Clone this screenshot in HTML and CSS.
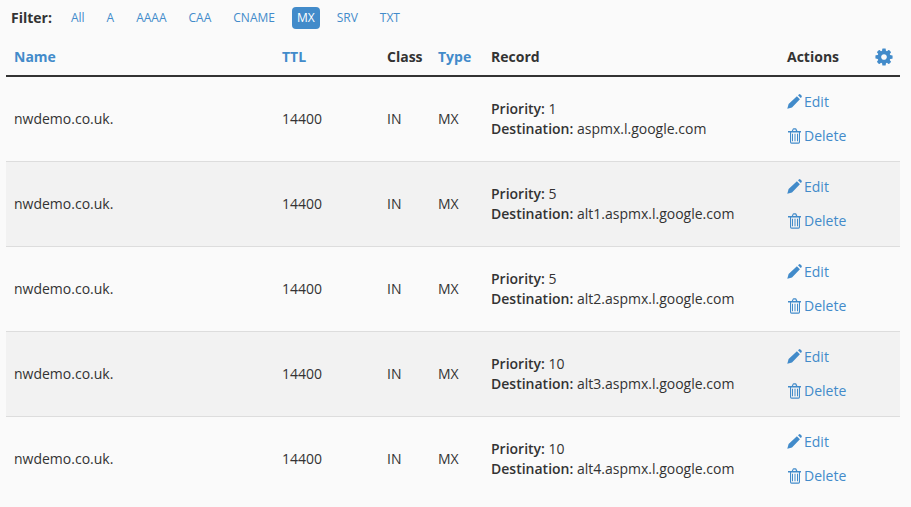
FILE: index.html
```html
<!DOCTYPE html>
<html lang="en">
<head>
<meta charset="utf-8">
<title>DNS records</title>
<link rel="stylesheet" href="styles.css">
</head>
<body>
<svg class="defs" width="0" height="0" aria-hidden="true">
  <symbol id="i-cog" viewBox="0 0 1792 1792"><path d="M1152 896q0-106-75-181t-181-75-181 75-75 181 75 181 181 75 181-75 75-181zm512-109v222q0 12-8 23t-20 13l-185 28q-19 54-39 91 35 50 107 138 10 12 10 25t-9 23q-27 37-99 108t-94 71q-12 0-26-9l-138-108q-44 23-91 38-16 136-29 186-7 28-36 28h-222q-14 0-24.5-8.5t-11.5-21.5l-28-184q-49-16-90-37l-141 107q-10 9-25 9-14 0-25-11-126-114-165-168-7-10-7-23 0-12 8-23 15-21 51-66.5t54-70.5q-27-50-41-99l-183-27q-13-2-21-12.5t-8-23.5v-222q0-12 8-23t19-13l186-28q14-46 39-92-40-57-107-138-10-12-10-24 0-10 9-23 26-36 98.5-107.5t94.5-71.5q13 0 26 10l138 107q44-23 91-38 16-136 29-186 7-28 36-28h222q14 0 24.5 8.5t11.5 21.5l28 184q49 16 90 37l142-107q9-9 24-9 13 0 25 10 129 119 165 170 7 8 7 22 0 12-8 23-15 21-51 66.5t-54 70.5q26 50 41 98l183 28q13 2 21 12.5t8 23.5z"/></symbol>
  <symbol id="i-pencil" viewBox="0 0 16 16"><path d="M.3 14.7 1.6 10 9.9 2.200l3 3L5 13.400zM11 1.200l.9-.8q.8-.6 1.500 0l1.100 1.100q.6.900 0 1.700l-.8.900z"/></symbol>
  <symbol id="i-trash" viewBox="0 0 16 16"><path d="M1 3h3.800l1-2.200q.2-.5.8-.5h2q.6 0 .8.5l1 2.200H14v1.400h-1V14q0 1.700-1.500 1.700h-7Q3 15.700 3 14V4.400H1zm5-.0h3l-.6-1.400H6.600zM4.100 4.400V14q0 .6.500.6h6.800q.5 0 .5-.6V4.400zM5 5.800h1v7.400H5zm2.500 0h1v7.400h-1zm2.500 0h1v7.400h-1z" fill-rule="evenodd"/></symbol>
</svg>

<nav class="filter">
  <strong class="filter-label">Filter:</strong>
  <a class="pill" href="#">All</a>
  <a class="pill" href="#">A</a>
  <a class="pill" href="#">AAAA</a>
  <a class="pill" href="#">CAA</a>
  <a class="pill" href="#">CNAME</a>
  <a class="pill pill-active" href="#">MX</a>
  <a class="pill" href="#">SRV</a>
  <a class="pill" href="#">TXT</a>
</nav>

<table class="records">
  <colgroup>
    <col class="c-name"><col class="c-ttl"><col class="c-class"><col class="c-type"><col class="c-record"><col class="c-actions">
  </colgroup>
  <thead>
    <tr>
      <th><a href="#">Name</a></th>
      <th><a href="#">TTL</a></th>
      <th>Class</th>
      <th><a href="#">Type</a></th>
      <th>Record</th>
      <th><div class="actions-head">Actions<a class="gear" href="#" aria-label="Settings"><svg class="icon-cog"><use href="#i-cog"/></svg></a></div></th>
    </tr>
  </thead>
  <tbody>
    <tr>
      <td>nwdemo.co.uk.</td><td>14400</td><td>IN</td><td>MX</td>
      <td><b>Priority:</b> 1<br><b>Destination:</b> aspmx.l.google.com</td>
      <td class="actions"><a href="#"><svg class="icon"><use href="#i-pencil"/></svg>Edit</a><a href="#"><svg class="icon"><use href="#i-trash"/></svg>Delete</a></td>
    </tr>
    <tr>
      <td>nwdemo.co.uk.</td><td>14400</td><td>IN</td><td>MX</td>
      <td><b>Priority:</b> 5<br><b>Destination:</b> alt1.aspmx.l.google.com</td>
      <td class="actions"><a href="#"><svg class="icon"><use href="#i-pencil"/></svg>Edit</a><a href="#"><svg class="icon"><use href="#i-trash"/></svg>Delete</a></td>
    </tr>
    <tr>
      <td>nwdemo.co.uk.</td><td>14400</td><td>IN</td><td>MX</td>
      <td><b>Priority:</b> 5<br><b>Destination:</b> alt2.aspmx.l.google.com</td>
      <td class="actions"><a href="#"><svg class="icon"><use href="#i-pencil"/></svg>Edit</a><a href="#"><svg class="icon"><use href="#i-trash"/></svg>Delete</a></td>
    </tr>
    <tr>
      <td>nwdemo.co.uk.</td><td>14400</td><td>IN</td><td>MX</td>
      <td><b>Priority:</b> 10<br><b>Destination:</b> alt3.aspmx.l.google.com</td>
      <td class="actions"><a href="#"><svg class="icon"><use href="#i-pencil"/></svg>Edit</a><a href="#"><svg class="icon"><use href="#i-trash"/></svg>Delete</a></td>
    </tr>
    <tr>
      <td>nwdemo.co.uk.</td><td>14400</td><td>IN</td><td>MX</td>
      <td><b>Priority:</b> 10<br><b>Destination:</b> alt4.aspmx.l.google.com</td>
      <td class="actions"><a href="#"><svg class="icon"><use href="#i-pencil"/></svg>Edit</a><a href="#"><svg class="icon"><use href="#i-trash"/></svg>Delete</a></td>
    </tr>
  </tbody>
</table>
</body>
</html>
```
FILE: styles.css
```css
html, body {
  margin: 0;
  padding: 0;
  height: 507px;
  overflow: hidden;
  background: #fafafa;
}
body {
  padding: 7px 11px 0 6px;
  box-sizing: border-box;
  font-family: "Open Sans", "Liberation Sans", sans-serif;
  font-size: 14px;
  line-height: 20px;
  color: #333;
}
a { color: #428bca; text-decoration: none; }
.defs { position: absolute; }

.filter {
  display: flex;
  align-items: center;
  height: 22px;
  padding-left: 5px;
}
.filter-label { margin-right: 14px; font-size: 14px; }
.pill {
  padding: 0 5px;
  margin-right: 12px;
  font-size: 12px;
  line-height: 22px;
  border-radius: 4px;
}
.pill-active { background: #428bca; color: #fff; }

.records {
  width: 894px;
  margin-top: 11px;
  border-collapse: collapse;
  table-layout: fixed;
}
.c-name { width: 268px; }
.c-ttl { width: 105px; }
.c-class { width: 51px; }
.c-type { width: 53px; }
.c-record { width: 296px; }
.c-actions { width: 121px; }

.records th {
  height: 36px;
  padding: 0 8px 2px;
  text-align: left;
  font-weight: 700;
  border-bottom: 2px solid #333;
  box-sizing: border-box;
}
.actions-head { display: flex; justify-content: space-between; align-items: center; }
.gear { display: flex; margin-right: -2px; }
.icon-cog { width: 20px; height: 20px; fill: #428bca; }

.records td {
  height: 85px;
  padding: 0 8px;
  vertical-align: middle;
  border-bottom: 1px solid #ddd;
  box-sizing: border-box;
}
.records tbody tr:nth-child(even) { background: #f2f2f2; }
.records tbody tr:last-child td { border-bottom: 0; }
.records b { font-weight: 600; }

.records td.actions { vertical-align: top; padding-top: 15px; }
.actions a {
  display: flex;
  align-items: center;
  height: 20px;
  margin-bottom: 14px;
}
.icon { width: 16px; height: 16px; margin-right: 1px; fill: #428bca; }
```
